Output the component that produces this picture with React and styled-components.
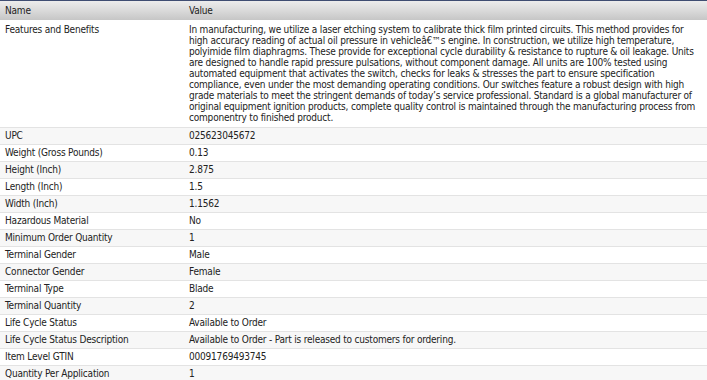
import React from 'react';
import styled, {createGlobalStyle} from 'styled-components';

const GlobalStyle = createGlobalStyle`
  html, body {
    margin: 0;
    padding: 0;
    background: #ffffff;
  }
  body {
    font-family: "DejaVu Sans Condensed", "DejaVu Sans", Verdana, sans-serif;
    font-size: 10px;
    letter-spacing: -0.2px;
    color: #222;
  }
`;

const Grid = styled.div`
  width: 707px;
  display: grid;
  grid-template-columns: 185px 1fr;
  border-top: 1px solid #3f4d72;
`;

const HeadCell = styled.div`
  height: 19px;
  line-height: 19px;
  padding-left: ${p => p.$first ? '5px' : '4px'};
  background: linear-gradient(to bottom, #ececec 0%, #dcdcdc 45%, #c6c6c6 100%);
  color: #222;
`;

const Cell = styled.div`
  padding: ${p => p.$tall ? '4px 4px 4px' : '0 4px'};
  padding-left: ${p => p.$first ? '5px' : '4px'};
  height: ${p => p.$tall ? 'auto' : '16px'};
  line-height: ${p => p.$tall ? '11px' : '16px'};
  background: ${p => p.$alt ? '#f7f7f7' : '#ffffff'};
  border-bottom: 1px solid #e3e3e3;
  white-space: nowrap;
`;

const features = [
  'In manufacturing, we utilize a laser etching system to calibrate thick film printed circuits. This method provides for',
  'high accuracy reading of actual oil pressure in vehicle\u00e2\u20ac\u2122s engine. In construction, we utilize high temperature,',
  'polyimide film diaphragms. These provide for exceptional cycle durability & resistance to rupture & oil leakage. Units',
  'are designed to handle rapid pressure pulsations, without component damage. All units are 100% tested using',
  'automated equipment that activates the switch, checks for leaks & stresses the part to ensure specification',
  'compliance, even under the most demanding operating conditions. Our switches feature a robust design with high',
  'grade materials to meet the stringent demands of today\u2019s service professional. Standard is a global manufacturer of',
  'original equipment ignition products, complete quality control is maintained through the manufacturing process from',
  'componentry to finished product.',
];

const rows = [
  ['UPC', '025623045672'],
  ['Weight (Gross Pounds)', '0.13'],
  ['Height (Inch)', '2.875'],
  ['Length (Inch)', '1.5'],
  ['Width (Inch)', '1.1562'],
  ['Hazardous Material', 'No'],
  ['Minimum Order Quantity', '1'],
  ['Terminal Gender', 'Male'],
  ['Connector Gender', 'Female'],
  ['Terminal Type', 'Blade'],
  ['Terminal Quantity', '2'],
  ['Life Cycle Status', 'Available to Order'],
  ['Life Cycle Status Description', 'Available to Order - Part is released to customers for ordering.'],
  ['Item Level GTIN', '00091769493745'],
  ['Quantity Per Application', '1'],
];

export default function App() {
  return (
    <>
      <GlobalStyle/>
      <Grid>
        <HeadCell $first>Name</HeadCell>
        <HeadCell>Value</HeadCell>

        <Cell $first $tall>Features and Benefits</Cell>
        <Cell $tall>
          {features.map((line, i) => (
            <div key={i}>{line}</div>
          ))}
        </Cell>

        {rows.map(([name, value], i) => (
          <React.Fragment key={name}>
            <Cell $first $alt={i % 2 === 0}>{name}</Cell>
            <Cell $alt={i % 2 === 0}>{value}</Cell>
          </React.Fragment>
        ))}
      </Grid>
    </>
  );
}
